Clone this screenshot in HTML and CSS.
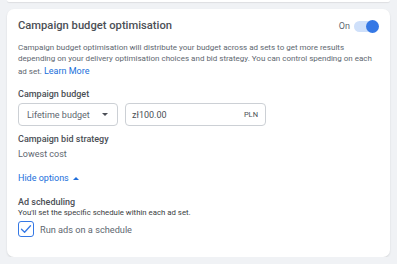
FILE: index.html
```html
<!DOCTYPE html>
<html>
<head>
<meta charset="utf-8">
<link rel="stylesheet" href="styles.css">
</head>
<body>
<div class="page">
  <div class="prev-card"></div>
  <div class="card">
    <div class="header">
      <div class="title">Campaign budget optimisation</div>
      <div class="switch">
        <span class="switch-label">On</span>
        <span class="track"><span class="knob"></span></span>
      </div>
    </div>
    <p class="desc">Campaign budget optimisation will distribute your budget across ad sets to get more results depending on your delivery optimisation choices and bid strategy. You can control spending on each ad set. <a class="link" href="#">Learn More</a></p>

    <div class="label mt-budget">Campaign budget</div>
    <div class="budget-row">
      <div class="select">
        <span>Lifetime budget</span>
        <span class="caret"></span>
      </div>
      <div class="input">
        <span class="amount">zł100.00</span>
        <span class="currency">PLN</span>
      </div>
    </div>

    <div class="label mt-bid">Campaign bid strategy</div>
    <div class="value">Lowest cost</div>

    <div class="toggle-link">Hide options <span class="up-caret"></span></div>

    <div class="label mt-sched">Ad scheduling</div>
    <div class="hint">You'll set the specific schedule within each ad set.</div>
    <label class="check-row">
      <span class="checkbox">
        <svg width="12" height="12" viewBox="0 0 12 12"><polyline points="1.5,6.2 4.6,9.2 10.5,2.8" fill="none" stroke="#3578e5" stroke-width="1.3" stroke-linecap="round" stroke-linejoin="round"/></svg>
      </span>
      <span class="check-text">Run ads on a schedule</span>
    </label>
  </div>
</div>
</body>
</html>
```

FILE: styles.css
```css
html, body {
  margin: 0;
  padding: 0;
}
body {
  background: #f0f2f5;
  font-family: Roboto, "Liberation Sans", Arial, sans-serif;
  color: #606770;
}
.page {
  padding: 0 7px;
}
.prev-card {
  height: 2px;
  background: #fff;
  border-radius: 0 0 6px 6px;
  box-shadow: 0 1px 1px rgba(0, 0, 0, 0.08);
}
.card {
  margin-top: 7px;
  height: 248px;
  box-sizing: border-box;
  background: #fff;
  border-radius: 7px;
  box-shadow: 0 1px 2px rgba(0, 0, 0, 0.12);
  padding: 10px 11px 0 11px;
  display: flex;
  flex-direction: column;
}
.header {
  display: flex;
  align-items: center;
  justify-content: space-between;
  height: 14px;
}
.title {
  font-size: 11.2px;
  font-weight: 500;
  color: #4b4f56;
  line-height: 14px;
}
.switch {
  display: flex;
  align-items: center;
  gap: 4px;
  margin-right: 1px;
}
.switch-label {
  font-size: 9px;
  color: #606770;
  line-height: 14px;
}
.track {
  position: relative;
  width: 24px;
  height: 11px;
  border-radius: 6px;
  background: #cfe0fa;
}
.knob {
  position: absolute;
  right: -1px;
  top: -1px;
  width: 13px;
  height: 13px;
  border-radius: 50%;
  background: #3578e5;
}
.desc {
  margin: 10px 0 0 0;
  font-size: 8px;
  line-height: 10.5px;
  color: #606770;
}
.link {
  color: #216fdb;
  font-size: 9px;
  line-height: 15px;
  text-decoration: none;
}
.label {
  font-size: 9px;
  font-weight: 500;
  line-height: 12px;
  color: #4b4f56;
}
.mt-budget { margin-top: 9px; }
.mt-bid { margin-top: 7px; }
.mt-sched { margin-top: 12px; }
.budget-row {
  display: flex;
  gap: 7px;
  margin-top: 3px;
}
.select, .input {
  height: 23px;
  box-sizing: border-box;
  border: 1px solid #ccd0d5;
  border-radius: 4px;
  display: flex;
  align-items: center;
  font-size: 9px;
  color: #606770;
}
.select {
  width: 100px;
  padding: 0 9px 0 8px;
  justify-content: space-between;
}
.caret {
  width: 0;
  height: 0;
  border-left: 3.5px solid transparent;
  border-right: 3.5px solid transparent;
  border-top: 3.5px solid #4b4f56;
}
.input {
  width: 141px;
  padding: 0 7px 0 6px;
  justify-content: space-between;
}
.amount {
  color: #4b4f56;
}
.currency {
  font-size: 7.5px;
  color: #4b4f56;
}
.value {
  margin-top: 3px;
  font-size: 9px;
  line-height: 12px;
  color: #606770;
}
.toggle-link {
  margin-top: 12px;
  font-size: 9px;
  line-height: 12px;
  color: #216fdb;
  display: flex;
  align-items: center;
  gap: 4px;
}
.up-caret {
  width: 0;
  height: 0;
  border-left: 3px solid transparent;
  border-right: 3px solid transparent;
  border-bottom: 3px solid #216fdb;
}
.hint {
  font-size: 7.8px;
  line-height: 10px;
  color: #3a3d42;
}
.check-row {
  margin-top: 3px;
  display: flex;
  align-items: center;
  gap: 6px;
}
.checkbox {
  width: 16px;
  height: 16px;
  box-sizing: border-box;
  border: 1.5px solid #3578e5;
  border-radius: 3px;
  display: flex;
  align-items: center;
  justify-content: center;
}
.check-text {
  font-size: 9.2px;
  color: #606770;
}
```
